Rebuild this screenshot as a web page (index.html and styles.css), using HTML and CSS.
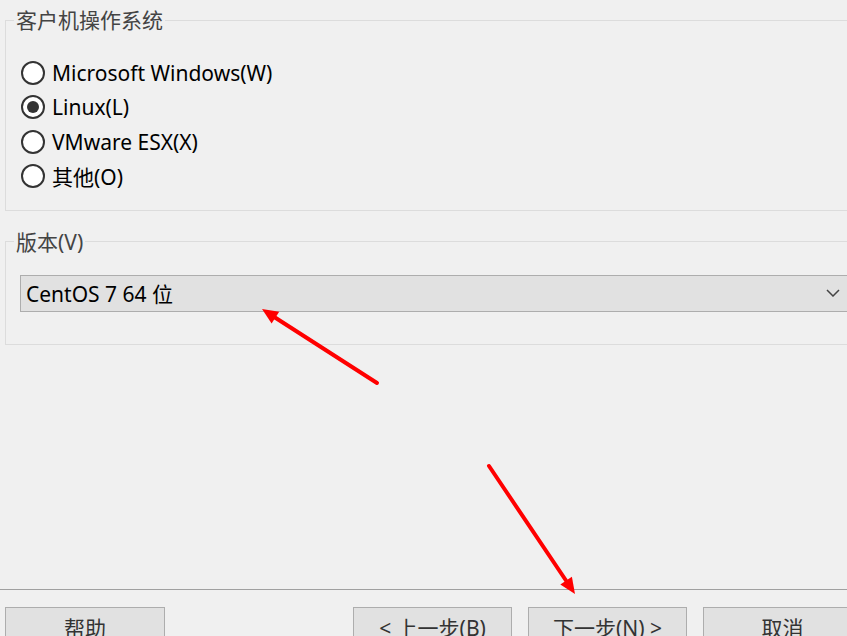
FILE: index.html
```html
<!DOCTYPE html>
<html lang="zh-CN">
<head>
  <meta charset="UTF-8">
  <meta name="viewport" content="width=device-width, initial-scale=1.0">
  <title>新建虚拟机向导</title>
  <link rel="stylesheet" href="styles.css">
</head>
<body>

  <div class="wizard">
    <fieldset class="group os-group">
      <legend>客户机操作系统</legend>
      <div class="radio-list">
        <label class="radio"><span class="radio-box"></span>Microsoft Windows(W)</label>
        <label class="radio checked"><span class="radio-box"></span>Linux(L)</label>
        <label class="radio"><span class="radio-box"></span>VMware ESX(X)</label>
        <label class="radio"><span class="radio-box"></span>其他(O)</label>
      </div>
    </fieldset>

    <fieldset class="group version-group">
      <legend>版本(V)</legend>
      <div class="select">
        <span>CentOS 7 64 位</span>
        <svg class="chevron" width="14" height="8" viewBox="0 0 14 8">
          <path d="M1 1 L7 7 L13 1" fill="none" stroke="#444" stroke-width="1.5"/>
        </svg>
      </div>
    </fieldset>

    <div class="footer">
      <button class="btn help-btn">帮助</button>
      <button class="btn">&lt; 上一步(B)</button>
      <button class="btn">下一步(N) &gt;</button>
      <button class="btn">取消</button>
    </div>
  </div>

  <!-- annotation arrows -->
  <svg class="arrows" width="847" height="636" viewBox="0 0 847 636">
    <line x1="377" y1="383" x2="275" y2="317.5" stroke="#ff0000" stroke-width="4" stroke-linecap="round"/>
    <polygon points="262,309 279.2,311.8 271.6,323.6" fill="#ff0000"/>
    <line x1="489" y1="466" x2="566" y2="580.5" stroke="#ff0000" stroke-width="4" stroke-linecap="round"/>
    <polygon points="575,594 560.3,584.6 571.9,576.8" fill="#ff0000"/>
  </svg>

</body>
</html>
```

FILE: styles.css
```css
html, body {
  margin: 0;
  padding: 0;
  height: 636px;
  overflow: hidden;
}

body {
  position: relative;
  background: #f0f0f0;
  font-family: 'Noto Sans', 'Noto Sans CJK SC', sans-serif;
  font-size: 21px;
  color: #000;
}

.wizard {
  display: flex;
  flex-direction: column;
  height: 636px;
}

.group {
  margin: 0 -30px 0 5px;
  padding: 0 14px;
  border: 1px solid #dcdcdc;
  min-width: 0;
}

.group legend {
  margin-left: -6px;
  padding: 0 2px;
  line-height: 28px;
  color: #444;
}

.os-group {
  margin-top: 6px;
  padding-top: 21.5px;
  padding-bottom: 16.5px;
}

.version-group {
  margin-top: 16.5px;
  padding-top: 19px;
  padding-bottom: 32px;
}

.radio-list {
  display: flex;
  flex-direction: column;
}

.radio {
  display: flex;
  align-items: center;
  height: 34.5px;
  padding-left: 1px;
  gap: 7px;
}

.radio-box {
  width: 20px;
  height: 20px;
  border: 2px solid #333;
  border-radius: 50%;
  background: #fff;
  display: flex;
  align-items: center;
  justify-content: center;
}

.radio.checked .radio-box::after {
  content: "";
  width: 12px;
  height: 12px;
  border-radius: 50%;
  background: #333;
}

.select {
  display: flex;
  align-items: center;
  justify-content: space-between;
  height: 35px;
  padding: 0 21px 0 5px;
  background: #e1e1e1;
  border: 1px solid #adadad;
}

.footer {
  box-sizing: border-box;
  margin-top: auto;
  height: 47px;
  border-top: 1px solid #a0a0a0;
  padding: 17px 0 0 5px;
  display: flex;
  align-items: flex-start;
  gap: 16px;
}

.btn {
  flex: none;
  width: 159px;
  height: 40px;
  background: #e1e1e1;
  border: 1px solid #adadad;
  font-family: inherit;
  font-size: 21px;
  color: #333;
  padding: 0;
}

.help-btn {
  width: 160px;
  margin-right: 172px;
}

.arrows {
  position: absolute;
  top: 0;
  left: 0;
  pointer-events: none;
}
```
